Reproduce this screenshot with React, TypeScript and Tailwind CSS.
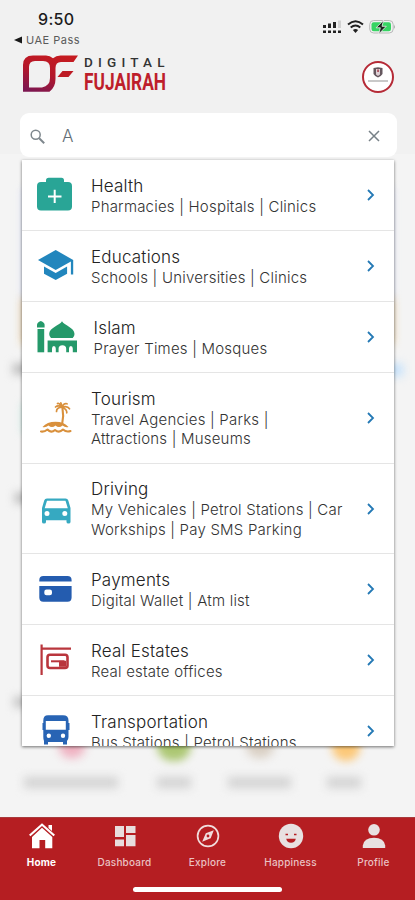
import type { ReactNode } from 'react';

interface Service {
  title: string;
  lines: string[];
  icon: ReactNode;
  height: string;
  textPad?: string;
}

const SERVICES: Service[] = [
  {
    title: 'Health',
    lines: ['Pharmacies | Hospitals | Clinics'],
    icon: <HealthIcon />,
    height: 'h-[71px]',
  },
  {
    title: 'Educations',
    lines: ['Schools | Universities | Clinics'],
    icon: <EducationIcon />,
    height: 'h-[71px]',
  },
  {
    title: 'Islam',
    lines: ['Prayer Times | Mosques'],
    icon: <MosqueIcon />,
    height: 'h-[71px]',
    textPad: 'pl-[17px]',
  },
  {
    title: 'Tourism',
    lines: ['Travel Agencies | Parks |', 'Attractions | Museums'],
    icon: <IslandIcon />,
    height: 'h-[91px]',
  },
  {
    title: 'Driving',
    lines: ['My Vehicales | Petrol Stations | Car', 'Workships | Pay SMS Parking'],
    icon: <CarIcon />,
    height: 'h-[90px]',
  },
  {
    title: 'Payments',
    lines: ['Digital Wallet | Atm list'],
    icon: <CardIcon />,
    height: 'h-[71px]',
  },
  {
    title: 'Real Estates',
    lines: ['Real estate offices'],
    icon: <EstateIcon />,
    height: 'h-[71px]',
  },
  {
    title: 'Transportation',
    lines: ['Bus Stations | Petrol Stations'],
    icon: <BusIcon />,
    height: 'h-[71px]',
  },
];

const TABS = [
  { label: 'Home', icon: <HomeIcon />, active: true },
  { label: 'Dashboard', icon: <DashboardIcon />, active: false },
  { label: 'Explore', icon: <CompassIcon />, active: false },
  { label: 'Happiness', icon: <SmileIcon />, active: false },
  { label: 'Profile', icon: <ProfileIcon />, active: false },
];

function HealthIcon() {
  return (
    <svg className="size-10" viewBox="0 0 40 40">
      <path fill="#29a596" d="M9 7V5.5Q9 2.8 11.7 2.8H24.5Q27 2.8 27 5.5V7H31Q35 7 35 11V31.5Q35 35.5 31 35.5H4Q0 35.5 0 31.5V11Q0 7 4 7Z" />
      <path stroke="#fff" strokeWidth="2" d="M17.7 14.7V28M11 21.4H24.5" />
    </svg>
  );
}

function EducationIcon() {
  return (
    <svg className="size-10" viewBox="0 0 40 40">
      <g fill="#2286bd">
        <path d="M18.7 4 1 14l17.7 10 15.2-8.6v13.2h2.3V14Z" />
        <path d="M7 20.5v7.2l11.7 6.3 11.4-6.3v-7.2l-11.4 6.6Z" />
      </g>
    </svg>
  );
}

function MosqueIcon() {
  return (
    <svg className="size-10" viewBox="0 0 40 40">
      <g fill="#25996a">
        <path d="M0 10.5V8Q0 5.5 3.8 4 7.6 5.5 7.6 8v2.5Z" />
        <path d="M.5 12h6.7v23.3H.5Z" />
        <path d="M25 4.2c2 4 12.5 6.2 12.5 12.8q0 2.3-1.8 4.1H14q-1.8-1.8-1.8-4.1C12.2 10.4 23 8.2 25 4.2Z" />
        <path d="M10.6 23.5H40v11.8h-4.2v-3.5q0-2.7-1.9-2.7t-1.9 2.7v3.5h-2.8v-3.5q0-3.6-3.8-3.6t-3.8 3.6v3.5H18.8v-3.5q0-2.7-1.9-2.7T15 31.8v3.5h-4.4Z" />
      </g>
    </svg>
  );
}

function IslandIcon() {
  return (
    <svg className="size-10" viewBox="0 0 40 40" fill="none" stroke="#d9903c" strokeLinecap="round" strokeLinejoin="round">
      <path strokeWidth="2.1" d="M25.5 10.5Q27 18 25.2 25.5" />
      <path
        strokeWidth="1.7"
        d="M25 9.2Q21 6.5 18.5 9M25 9.2Q19.5 9.5 19.5 13.5M25 9.2Q22 4.5 20.5 5.5M25 9.2Q27 4.5 30 5.8M25 9.2Q30.5 7.5 32.5 10.8M25 9.2Q30 11 29.8 14.8M24.6 9Q24.8 6 23.8 4.8"
      />
      <path fill="#d9903c" stroke="none" d="M5.5 29Q10 23.7 18.500 23.7T31.5 29Q28.5 30 25.5 27.5 22 30.5 18.5 27.5 15 30.5 11.5 27.5 8.5 30 5.5 29Z" />
      <path strokeWidth="2.1" d="M4 33.5Q7.5 34 10.5 31.5 14 35.5 18 32 22 35.5 26 31.5 29.5 34.5 33.5 33" />
    </svg>
  );
}

function CarIcon() {
  return (
    <svg className="size-10" viewBox="0 0 40 40">
      <path
        fill="#36a9c1"
        fillRule="evenodd"
        d="M10 9.5H28.5Q30.7 9.5 31.3 11.5L33.5 19V33Q33.5 34.5 31.5 34.5T29.5 33V31.3H9V33Q9 34.5 7 34.5T5 33V19L7.2 11.5Q7.8 9.5 10 9.5ZM10 11.7 7.7 19.2H30.8L28.5 11.7ZM10 22a2.5 2.5 0 1 0 0 5 2.5 2.5 0 1 0 0-5ZM27.8 22a2.5 2.5 0 1 0 0 5 2.5 2.5 0 1 0 0-5Z"
      />
    </svg>
  );
}

function CardIcon() {
  return (
    <svg className="size-10" viewBox="0 0 40 40">
      <g fill="#245caf">
        <path d="M2.3 12.5V11Q2.3 7 6.3 7H30.5Q34.6 7 34.6 11v1.5Z" />
        <path fillRule="evenodd" d="M2.3 17H34.6V28.5Q34.6 32.7 30.5 32.7H6.3Q2.3 32.7 2.3 28.5ZM9.5 20.6Q7.3 20.6 7.3 22.8V24.2Q7.3 26.3 9.5 26.3H12.8Q15 26.3 15 24.2V22.8Q15 20.6 12.8 20.6Z" />
      </g>
    </svg>
  );
}

function EstateIcon() {
  return (
    <svg className="size-10" viewBox="0 0 40 40" fill="none" stroke="#b9363d">
      <path strokeWidth="2.2" d="M4.6 4.5V35M3.5 8.7H34" />
      <rect x="10.5" y="14.8" width="20" height="13.2" rx="2.5" strokeWidth="2.6" />
      <path strokeWidth="2" d="M14 21.3H27.5" />
      <path fill="#b9363d" stroke="none" d="M22 20.800h7v6h-7Z" />
    </svg>
  );
}

function BusIcon() {
  return (
    <svg className="size-10" viewBox="0 0 40 40">
      <path
        fill="#2864b4"
        fillRule="evenodd"
        d="M11 4.3H26Q31.5 4.3 31.5 9.5V26Q31.5 28.3 30 30V33.5H26V31H11V33.5H7V30Q6.3 28.3 6.3 26V9.5Q6.3 4.3 11 4.3ZM8.8 10V18.7H28.8V10ZM11.8 22.5a2.2 2.2 0 1 0 0 4.4 2.2 2.2 0 1 0 0-4.4ZM26 22.5a2.2 2.2 0 1 0 0 4.4 2.2 2.2 0 1 0 0-4.4Z"
      />
      <path fill="#2864b4" d="M5.5 12h1.500v7H5.5ZM31 12h1.5v7H31Z" />
    </svg>
  );
}

function HomeIcon() {
  return (
    <svg className="size-7" viewBox="0 0 28 28" fill="#fff">
      <path d="M14 1.2 27 12.8 25.5 14.3 14 4 2.5 14.3 1 12.8Z" />
      <path d="M14 5.7 24.3 15V26.2H17.2V18H11.5V26.2H4V15ZM20.5 3H24V9L20.5 6Z" />
    </svg>
  );
}

function DashboardIcon() {
  return (
    <svg className="size-7" viewBox="0 0 28 28" fill="#e8dddd">
      <path d="M4 4h9v11H4ZM15 4h9.5v7H15ZM4 17.5h9v6.7H4ZM15 13h9.5v11.2H15Z" />
    </svg>
  );
}

function CompassIcon() {
  return (
    <svg className="size-7" viewBox="0 0 28 28">
      <circle cx="14" cy="14" r="10.4" fill="none" stroke="#f1dddd" strokeWidth="1.7" />
      <path fill="#f1dddd" fillRule="evenodd" d="M19.8 8.2 16.7 16.2 8.2 19.8 11.8 11.3ZM14 12.6a1.4 1.4 0 1 0 0 2.8 1.4 1.4 0 1 0 0-2.8Z" />
    </svg>
  );
}

function SmileIcon() {
  return (
    <svg className="size-7" viewBox="0 0 28 28">
      <circle cx="14" cy="14" r="12.2" fill="#e8e1e1" />
      <path fill="#b51e22" d="M9.2 16.8H18.8Q18 20.700 14 20.7T9.2 16.8Z" />
      <path stroke="#b51e22" strokeWidth="1.5" d="M8.5 12.5H11M17 12.5H19.5" />
    </svg>
  );
}

function ProfileIcon() {
  return (
    <svg className="size-7" viewBox="0 0 28 28" fill="#e8e1e1">
      <circle cx="14" cy="7.8" r="5.8" />
      <path d="M2.8 26V23.5Q4 15.8 14 15.8T25.2 23.5V26Z" />
    </svg>
  );
}

function StatusBar() {
  return (
    <div className="flex h-[49px] items-start justify-between">
      <div className="flex flex-col">
        <span className="mt-[9px] ml-[38px] text-[16px] leading-[21px] font-medium tracking-[0.3px] text-[#1c1c1c]">9:50</span>
        <div className="ml-[14px] flex items-center gap-[4px] leading-[20px]">
          <svg className="h-[8px] w-[8px]" viewBox="0 0 8 8">
            <path d="M0 4 8 .5V7.5Z" fill="#191919" />
          </svg>
          <span className="text-[11px] tracking-[0.5px] text-[#5a5a5a]">UAE Pass</span>
        </div>
      </div>
      <div className="mt-[19px] mr-[19px] flex items-center gap-[5px]">
        <svg className="h-[16px] w-[20px]" viewBox="0 0 20 16">
          <g fill="#222">
            <path d="M1 6h3v3H1ZM6 4.5h3V9H6ZM11 3h3v6h-3Z" />
            <path d="M1 11.5h3V14H1ZM6 11.5h3V14H6ZM11 11.5h3V14h-3ZM16 11.5h3V14h-3Z" />
          </g>
          <path d="M16 1.500h3V9h-3Z" fill="#d2d2d2" />
        </svg>
        <svg className="h-[16px] w-[17px]" viewBox="0 0 17 16" fill="none" stroke="#202020" strokeWidth="2">
          <path d="M1 5.5Q8.5-1 16 5.5M3.7 8.6Q8.5 4.3 13.3 8.6" />
          <path d="M5.9 11Q8.5 8.9 11.1 11L8.5 13.9Z" fill="#202020" stroke="none" />
        </svg>
        <svg className="h-[16px] w-[27px]" viewBox="0 0 27 16">
          <rect x=".7" y="1.5" width="23.5" height="12.5" rx="4" fill="#f1f1f1" stroke="#b9b9b9" />
          <rect x="2.5" y="3.300" width="19.5" height="9" rx="2.2" fill="#37d463" />
          <path d="M25.2 5.5q1.5 2.2 0 4.5Z" fill="#999" />
          <path d="M14.6 1.2 7.1 8.8h4.200L9.8 14.9 17.3 7.3H13Z" fill="#1b241d" stroke="#f1f1f1" strokeWidth=".8" />
        </svg>
      </div>
    </div>
  );
}

function BrandHeader() {
  return (
    <header className="flex h-[64px] items-start pl-[22px] pr-[21px]">
      <svg className="mt-[5px] h-[40px] w-[57px]" viewBox="0 0 57 40">
        <defs>
          <linearGradient id="brand" x1=".7" y1="0" x2=".2" y2="1">
            <stop offset="0" stopColor="#c51b20" />
            <stop offset=".5" stopColor="#b5172a" />
            <stop offset="1" stopColor="#7d1751" />
          </linearGradient>
        </defs>
        <path
          fill="url(#brand)"
          fillRule="evenodd"
          d="M1 38V11Q1 1.500 11 1.5H24Q28 1.5 31 4.3 34 1.5 38.5 1.5H56L51.5 8H39Q33.5 8 33.5 14V25Q33.5 33 27.5 37.8H1ZM7 33.5H20Q28 32 28 24V14Q28 7 21 7H13Q7 7 7 13Z"
        />
        <path d="M40.5 17H51.5L46.5 23H35.5Z" fill="#bd1b25" />
      </svg>
      <div className="mt-[6px] ml-[5px] flex flex-col font-[Roboto,sans-serif]">
        <span className="text-[13.5px] leading-[15px] font-medium tracking-[5.2px] text-[#333]">DIGITAL</span>
        <svg className="h-[28px] w-[88px]" viewBox="0 0 88 28">
          <text x="0" y="20.3" textLength="82" lengthAdjust="spacingAndGlyphs" fontFamily="Roboto, sans-serif" fontSize="23.5" fontWeight="700" fill="#be1e2b">
            FUJAIRAH
          </text>
        </svg>
      </div>
      <div className="mt-[12px] ml-auto flex size-[32px] flex-col items-center rounded-full border-[2px] border-[#b52a36] bg-white">
        <svg className="mt-[4px] h-[11px] w-[10px]" viewBox="0 0 10 11">
          <path d="M.5 1 5 .3 9.5 1V7Q8 9.5 5 10.5 2 9.5.5 7Z" fill="#65575e" />
          <path d="M3 2h4v5.5L5 9 3 7.5Z" fill="#dfd0d5" />
          <path d="M4.3 2.5h1.5V5H4.3Z" fill="#a03744" />
        </svg>
        <div className="mt-[2px] h-[2px] w-[20px] bg-[#c9c9c9]" />
      </div>
    </header>
  );
}

// Blurred home screen that shows around the results panel
function Backdrop() {
  return (
    <div className="absolute inset-x-0 top-[154px] h-[663px] overflow-hidden bg-[#f4f4f4]">
      <div className="absolute top-[34px] left-[23px] h-[150px] w-[369px] bg-[#d5dcfa] blur-[4px]" />
      <div className="absolute top-[144px] left-[22px] h-[46px] w-[371px] bg-[#f0cc90] blur-[5px]" />
      <div className="absolute top-[210px] left-[13px] h-[10px] w-[50px] bg-[#b5b5b5] blur-[5px]" />
      <div className="absolute top-[210px] left-[375px] h-[12px] w-[28px] bg-[#c2e0fb] blur-[5px]" />
      <div className="absolute top-[249px] left-[22px] h-[30px] w-[20px] bg-[#c9e9e3] blur-[4px]" />
      <div className="absolute top-[339px] left-[15px] h-[10px] w-[40px] bg-[#b5b5b5] blur-[5px]" />
      <div className="absolute top-[543px] left-[14px] h-[10px] w-[40px] bg-[#bdbdbd] blur-[5px]" />
      <div className="absolute top-[580px] left-[59px] h-[24px] w-[26px] rounded-full bg-[#efb0c0] blur-[5px]" />
      <div className="absolute top-[576px] left-[157px] h-[31px] w-[34px] rounded-full bg-[#acc773] blur-[4px]" />
      <div className="absolute top-[578px] left-[246px] h-[26px] w-[28px] rounded-full bg-[#d9cfc3] blur-[5px]" />
      <div className="absolute top-[576px] left-[332px] h-[31px] w-[28px] rounded-full bg-[#fcc878] blur-[4px]" />
      <div className="absolute top-[623px] left-[24px] h-[11px] w-[94px] bg-[#d2d2d2] blur-[5px]" />
      <div className="absolute top-[623px] left-[157px] h-[11px] w-[34px] bg-[#d2d2d2] blur-[5px]" />
      <div className="absolute top-[623px] left-[228px] h-[11px] w-[63px] bg-[#d2d2d2] blur-[5px]" />
      <div className="absolute top-[623px] left-[327px] h-[11px] w-[34px] bg-[#d2d2d2] blur-[5px]" />
    </div>
  );
}

function ServiceRow({ title, lines, icon, height, textPad = 'pl-[14.5px]' }: Service) {
  return (
    <div className={`flex shrink-0 items-center border-b border-[#e5e5e5] pl-[15px] pr-[19px] ${height}`}>
      <div className="w-10 shrink-0">{icon}</div>
      <div className={`flex flex-1 flex-col pt-[1.5px] whitespace-nowrap ${textPad}`}>
        <span className="text-[17px] leading-[21px] font-light tracking-[0.2px] text-[#222]">{title}</span>
        {lines.map((line) => (
          <span key={line} className="text-[15px] leading-[19.5px] font-light tracking-[0.21px] text-[#333]">
            {line}
          </span>
        ))}
      </div>
      <svg className="h-[12px] w-[9px] shrink-0" viewBox="0 0 9 12" fill="none" stroke="#2479b5" strokeWidth="1.8">
        <path d="M2 1 7 6 2 11" />
      </svg>
    </div>
  );
}

export default function App() {
  return (
    <div className="relative isolate flex h-[900px] w-[415px] flex-col overflow-hidden bg-[#f1f1f1] font-[Inter,sans-serif]">
      <Backdrop />
      <div className="relative flex flex-1 flex-col">
        <StatusBar />
        <BrandHeader />

        {/* Search field */}
        <div className="mr-[18px] ml-[20px] flex h-[44px] items-center rounded-[9px] bg-white pt-[2px] pr-[17px] pl-[10px]">
          <svg className="size-[15px]" viewBox="0 0 15 15" fill="none" stroke="#7e878d" strokeWidth="1.5">
            <circle cx="5.7" cy="5.7" r="4.5" />
            <path d="m9.2 9.200 5 5" strokeWidth="2" />
          </svg>
          <span className="ml-[17px] flex-1 text-[17px] leading-[24px] font-light text-[#626d75]">A</span>
          <svg className="size-[12px]" viewBox="0 0 12 12" stroke="#778187" strokeWidth="1.5">
            <path d="m1 1 10 10M11 1 1 11" />
          </svg>
        </div>

        {/* Results */}
        <div className="mx-auto mt-[3px] flex h-[586px] w-[372px] flex-col overflow-hidden bg-white shadow-[0_1px_3px_rgba(0,0,0,0.55)]">
          {SERVICES.map((service) => (
            <ServiceRow key={service.title} {...service} />
          ))}
        </div>
      </div>

      {/* Bottom tabs */}
      <nav className="relative flex h-[83px] flex-col items-center border-t border-[#a83a3c] bg-[#b51e22]">
        <div className="grid w-full grid-cols-5">
          {TABS.map(({ label, icon, active }) => (
            <div key={label} className="flex flex-col items-center pt-[4px]">
              {icon}
              <span className={`mt-[4px] text-[10px] leading-[16px] ${active ? 'font-bold tracking-[0.2px] text-white' : 'font-medium tracking-[0.2px] text-[#eac1c2]'}`}>
                {label}
              </span>
            </div>
          ))}
        </div>
        <div className="mt-[17px] h-[5px] w-[149px] rounded-full bg-white" />
      </nav>
    </div>
  );
}
